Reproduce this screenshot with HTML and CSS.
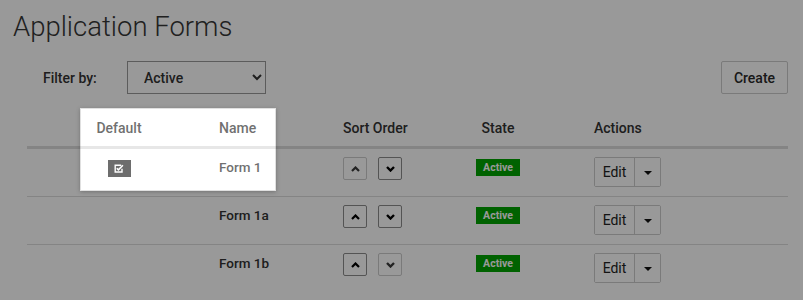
FILE: index.html
```html
<!DOCTYPE html>
<html lang="en">
<head>
<meta charset="utf-8">
<title>Application Forms</title>
<link rel="stylesheet" href="styles.css">
</head>
<body>
<div class="page">
  <h1 class="title">Application Forms</h1>
  <div class="content">
    <div class="toolbar">
      <label class="filter-label" for="filter">Filter by:</label>
      <select id="filter" class="filter-select">
        <option>Active</option>
        <option>Inactive</option>
        <option>All</option>
      </select>
      <button class="btn btn-create" type="button">Create</button>
    </div>
    <table class="forms">
      <colgroup>
        <col class="c-default"><col class="c-name"><col class="c-sort"><col class="c-state"><col class="c-actions">
      </colgroup>
      <thead>
        <tr>
          <th class="center">Default</th>
          <th>Name</th>
          <th>Sort Order</th>
          <th class="center">State</th>
          <th>Actions</th>
        </tr>
      </thead>
      <tbody>
        <tr>
          <td class="center">
            <span class="default-mark">
              <svg width="10" height="9" viewBox="0 0 10 9" aria-hidden="true">
                <path d="M7.2 1.2H1.2V8H8V4.8" fill="none" stroke="#fff" stroke-width="1.4"/>
                <path d="M2.8 4.2L4.4 5.8L8.9 1.2" fill="none" stroke="#fff" stroke-width="1.6"/>
              </svg>
            </span>
          </td>
          <td class="name">Form 1</td>
          <td>
            <div class="sort">
              <button class="sort-btn disabled" type="button" aria-label="Move up"><svg width="9" height="6" viewBox="0 0 9 6"><path d="M1 5L4.5 1.5L8 5" fill="none" stroke="currentColor" stroke-width="2.2"/></svg></button>
              <button class="sort-btn" type="button" aria-label="Move down"><svg width="9" height="6" viewBox="0 0 9 6"><path d="M1 1L4.5 4.5L8 1" fill="none" stroke="currentColor" stroke-width="2.4"/></svg></button>
            </div>
          </td>
          <td class="center"><span class="badge">Active</span></td>
          <td>
            <div class="btn-group"><button class="btn-edit" type="button">Edit</button><button class="btn-caret" type="button" aria-label="More"><span class="caret"></span></button></div>
          </td>
        </tr>
        <tr>
          <td></td>
          <td class="name">Form 1a</td>
          <td>
            <div class="sort">
              <button class="sort-btn" type="button" aria-label="Move up"><svg width="9" height="6" viewBox="0 0 9 6"><path d="M1 5L4.5 1.5L8 5" fill="none" stroke="currentColor" stroke-width="2.2"/></svg></button>
              <button class="sort-btn" type="button" aria-label="Move down"><svg width="9" height="6" viewBox="0 0 9 6"><path d="M1 1L4.5 4.5L8 1" fill="none" stroke="currentColor" stroke-width="2.4"/></svg></button>
            </div>
          </td>
          <td class="center"><span class="badge">Active</span></td>
          <td>
            <div class="btn-group"><button class="btn-edit" type="button">Edit</button><button class="btn-caret" type="button" aria-label="More"><span class="caret"></span></button></div>
          </td>
        </tr>
        <tr>
          <td></td>
          <td class="name">Form 1b</td>
          <td>
            <div class="sort">
              <button class="sort-btn" type="button" aria-label="Move up"><svg width="9" height="6" viewBox="0 0 9 6"><path d="M1 5L4.5 1.5L8 5" fill="none" stroke="currentColor" stroke-width="2.2"/></svg></button>
              <button class="sort-btn disabled" type="button" aria-label="Move down"><svg width="9" height="6" viewBox="0 0 9 6"><path d="M1 1L4.5 4.5L8 1" fill="none" stroke="currentColor" stroke-width="2.4"/></svg></button>
            </div>
          </td>
          <td class="center"><span class="badge">Active</span></td>
          <td>
            <div class="btn-group"><button class="btn-edit" type="button">Edit</button><button class="btn-caret" type="button" aria-label="More"><span class="caret"></span></button></div>
          </td>
        </tr>
      </tbody>
    </table>
  </div>
  <div class="tour-highlight"></div>
</div>
</body>
</html>
```

FILE: styles.css
```css
html, body {
  margin: 0;
  padding: 0;
  background: #fff;
}
body {
  font-family: Roboto, "Liberation Sans", sans-serif;
  color: #333;
  font-size: 14px;
  overflow: hidden;
}
.page {
  position: relative;
  width: 803px;
  height: 300px;
  box-sizing: border-box;
  padding: 11px 15px 0 13px;
}
.title {
  margin: 0;
  font-size: 27.5px;
  line-height: 31px;
  font-weight: 300;
  color: #363636;
}
.content {
  margin-left: 14px;
}
.toolbar {
  display: flex;
  align-items: center;
  margin-top: 19px;
  height: 33px;
}
.filter-label {
  padding-left: 16px;
  font-weight: 500;
  width: 84px;
  color: #333;
}
.filter-select {
  width: 139px;
  height: 33px;
  box-sizing: border-box;
  border: 1px solid #999;
  border-radius: 0;
  background: #fff;
  font-family: inherit;
  font-size: 14px;
  font-weight: 500;
  color: #333;
  padding: 0 8px 0 12px;
}
.btn {
  font-family: inherit;
  cursor: pointer;
}
.btn-create {
  margin-left: auto;
  width: 67px;
  height: 33px;
  border: 1px solid #ccc;
  border-radius: 2px;
  background: #fff;
  font-size: 14px;
  font-weight: 500;
  color: #2a2a2a;
  padding: 0;
}
.forms {
  margin-top: 16px;
  width: 761px;
  table-layout: fixed;
  border-collapse: separate;
  border-spacing: 0;
}
.c-default { width: 184px; }
.c-name { width: 124px; }
.c-sort { width: 75px; }
.c-state { width: 176px; }
.c-actions { width: 202px; }
.forms th {
  text-align: left;
  font-weight: 500;
  font-size: 14px;
  line-height: 20px;
  padding: 8px;
  border-bottom: 2px solid #ddd;
  white-space: nowrap;
  color: #333;
}
.forms td {
  border-top: 1px solid #ddd;
  padding: 8px 8px 9px;
  vertical-align: top;
  line-height: 20px;
  white-space: nowrap;
}
.forms .center {
  text-align: center;
}
.name {
  font-size: 13.5px;
  font-weight: 500;
  color: #333;
}
.default-mark {
  display: inline-flex;
  align-items: center;
  justify-content: center;
  width: 23px;
  height: 17px;
  margin-top: 3px;
  background: #2e2e2e;
  vertical-align: top;
}
.sort {
  display: flex;
  gap: 11px;
}
.sort-btn {
  width: 24px;
  height: 23px;
  box-sizing: border-box;
  padding: 0;
  border: 1px solid #8c8c8c;
  border-radius: 2px;
  background: #fff;
  color: #000;
  display: flex;
  align-items: center;
  justify-content: center;
}
.sort-btn.disabled {
  border-color: #ccc;
  color: #3a3a3a;
}
.badge {
  display: inline-block;
  margin-top: 2px;
  padding: 0 7px;
  height: 17px;
  line-height: 17px;
  background: #00a300;
  color: #fff;
  font-size: 10.5px;
  font-weight: 700;
  vertical-align: top;
}
.btn-group {
  display: inline-flex;
  height: 30px;
  border: 1px solid #ccc;
  border-radius: 2px;
  box-sizing: border-box;
  vertical-align: top;
}
.btn-edit, .btn-caret {
  border: 0;
  background: #fff;
  padding: 0;
  font-family: inherit;
  font-size: 14px;
  color: #222;
  height: 28px;
}
.btn-edit {
  width: 40px;
  border-right: 1px solid #ccc;
}
.btn-caret {
  width: 25px;
  display: flex;
  align-items: center;
  justify-content: center;
}
.caret {
  width: 0;
  height: 0;
  border-left: 4px solid transparent;
  border-right: 4px solid transparent;
  border-top: 4px solid #111;
  margin-top: 1px;
}
.tour-highlight {
  position: absolute;
  left: 80px;
  top: 108px;
  width: 196px;
  height: 83px;
  box-sizing: border-box;
  border: 1px solid rgba(0, 0, 0, 0.12);
  background: rgba(255, 255, 255, 0.3);
  box-shadow: 0 1px 4px rgba(0, 0, 0, 0.25), 0 0 0 2000px rgba(0, 0, 0, 0.4);
  pointer-events: none;
}
```
